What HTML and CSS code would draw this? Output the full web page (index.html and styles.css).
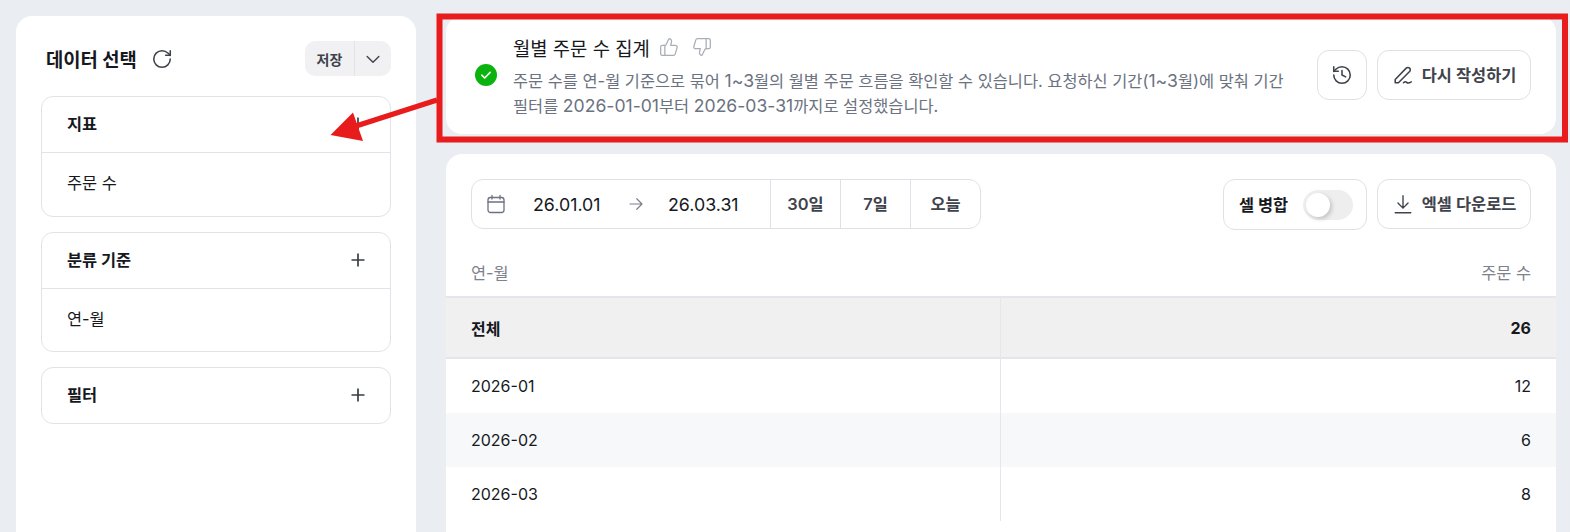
FILE: index.html
```html
<!DOCTYPE html>
<html lang="ko">
<head>
<meta charset="utf-8">
<title>월별 주문 수 집계</title>
<link rel="stylesheet" href="styles.css">
</head>
<body>
<div class="page">
  <aside class="side">
    <div class="side-head">
      <div class="side-title"><h2>데이터 선택</h2>
        <svg class="ic22" viewBox="0 0 24 24"><path d="M21 12a9 9 0 1 1-9-9c2.520 0 4.930 1 6.740 2.740L21 8"/><path d="M21 3v5h-5"/></svg>
      </div>
      <div class="save"><span class="save-label">저장</span><span class="save-more"><svg class="ic20" viewBox="0 0 24 24"><path d="m5 9 7 7 7-7"/></svg></span></div>
    </div>
    <section class="box">
      <div class="box-head"><span>지표</span><svg class="plus" viewBox="0 0 14 14"><path d="M7 .5v13M.5 7h13"/></svg></div>
      <div class="box-body">주문 수</div>
    </section>
    <section class="box">
      <div class="box-head"><span>분류 기준</span><svg class="plus" viewBox="0 0 14 14"><path d="M7 .5v13M.5 7h13"/></svg></div>
      <div class="box-body">연-월</div>
    </section>
    <section class="box">
      <div class="box-head last"><span>필터</span><svg class="plus" viewBox="0 0 14 14"><path d="M7 .5v13M.5 7h13"/></svg></div>
    </section>
  </aside>
  <main class="main">
    <section class="card summary">
      <svg class="check" viewBox="0 0 22 22"><circle cx="11" cy="11" r="11"/><path d="m6.800 11.200 2.900 2.800 5.400-5.600"/></svg>
      <div class="sum-text">
        <div class="sum-title"><h1>월별 주문 수 집계</h1>
          <svg class="thumb" viewBox="0 0 24 24"><path d="M7 10v11"/><path d="M15 5.880 14 10h5.830a2 2 0 0 1 1.920 2.560l-2.330 8A2 2 0 0 1 17.500 22H4a2 2 0 0 1-2-2v-8a2 2 0 0 1 2-2h2.760a2 2 0 0 0 1.790-1.110L12 2a3.130 3.130 0 0 1 3 3.880Z"/></svg>
          <svg class="thumb" viewBox="0 0 24 24"><path d="M17 14V3"/><path d="M9 18.120 10 14H4.170a2 2 0 0 1-1.920-2.560l2.330-8A2 2 0 0 1 6.500 2H20a2 2 0 0 1 2 2v8a2 2 0 0 1-2 2h-2.760a2 2 0 0 0-1.790 1.110L12 22a3.130 3.130 0 0 1-3-3.880Z"/></svg>
        </div>
        <p>주문 수를 연-월 기준으로 묶어 <span class="num">1~3</span>월의 월별 주문 흐름을 확인할 수 있습니다. 요청하신 기간(<span class="num">1~3</span>월)에 맞춰 기간<br>필터를 <span class="num">2026-01-01</span>부터 <span class="num">2026-03-31</span>까지로 설정했습니다.</p>
      </div>
      <div class="btn square"><svg class="ic22" viewBox="0 0 24 24"><path d="M3 12a9 9 0 1 0 9-9 9.750 9.750 0 0 0-6.740 2.740L3 8"/><path d="M3 3v5h5"/><path d="M12 7v5l4 2"/></svg></div>
      <div class="btn wide"><svg class="ic22" viewBox="0 0 24 24"><path d="M3.500 20.500V17L15.500 4.500a2.600 2.600 0 0 1 3.700 3.700L7 20.500Z"/><path d="M12.500 20.500c1.500-1.500 2.500-1.500 3.500-.5s2.500 1 5-.5"/></svg><span>다시 작성하기</span></div>
    </section>
    <section class="card data">
      <div class="toolbar">
        <div class="dates">
          <div class="range">
            <svg class="cal" viewBox="0 0 20 20"><rect x="2" y="3.500" width="16" height="15" rx="2.500"/><path d="M2 8h16M6 1.500v3.500M14 1.500v3.500"/></svg>
            <span class="date">26.01.01</span>
            <svg class="arrow" viewBox="0 0 24 24"><path d="M4 12h16M13 5l7 7-7 7"/></svg>
            <span class="date">26.03.31</span>
          </div>
          <span class="preset">30일</span><span class="preset">7일</span><span class="preset">오늘</span>
        </div>
        <div class="tools">
          <div class="btn merge"><span>셀 병합</span><span class="toggle"><span class="knob"></span></span></div>
          <div class="btn wide"><svg class="ic22 dl" viewBox="0 0 24 24"><path d="M12 3v13.500M6.500 11l5.500 5.500 5.500-5.500M3.500 21.500h17"/></svg><span>엑셀 다운로드</span></div>
        </div>
      </div>
      <div class="thead"><span>연-월</span><span>주문 수</span></div>
      <div class="row total"><div class="c1">전체</div><div class="c2">26</div></div>
      <div class="row"><div class="c1">2026-01</div><div class="c2">12</div></div>
      <div class="row alt"><div class="c1">2026-02</div><div class="c2">6</div></div>
      <div class="row"><div class="c1">2026-03</div><div class="c2">8</div></div>
    </section>
  </main>
</div>
<svg class="annot" viewBox="0 0 1570 532">
  <rect x="439.500" y="16.500" width="1125.500" height="123"/>
  <path class="shaft" d="M437 100 356 126"/>
  <path class="head" d="M330.500 135 353 112.500 363 141Z"/>
</svg>
</body>
</html>
```
FILE: styles.css
```css
* { box-sizing: border-box; }
html, body { margin: 0; height: 100%; }
body {
  position: relative;
  overflow: hidden;
  background: #eaedf2;
  color: #16181d;
  font-family: Inter, "Noto Sans CJK KR", "Noto Sans", sans-serif;
  font-size: 16px;
}
svg { display: block; flex: none; fill: none; stroke: currentColor; stroke-linecap: round; stroke-linejoin: round; }
h1, h2, p { margin: 0; }

.page { display: flex; gap: 30px; height: 532px; padding: 16px 14px 0 16px; overflow: hidden; }

.side {
  flex: none; width: 400px; height: 560px;
  background: #fff; border-radius: 16px 16px 0 0;
  padding: 25px 25px 0;
  display: flex; flex-direction: column; gap: 15px;
}
.side-head { display: flex; justify-content: space-between; align-items: center; height: 35px; margin-bottom: 5px; }
.side-title { display: flex; align-items: center; gap: 14px; padding-left: 5px; color: #3f434c; }
.side-title h2 { font-size: 18.800px; font-weight: 700; color: #16181d; }
.ic22 { width: 22px; height: 22px; stroke-width: 1.700; }
.ic20 { width: 20px; height: 20px; stroke-width: 1.700; }
.dl { stroke-width: 1.500; }

.save { display: flex; height: 35px; width: 86px; background: #f1f1f3; border-radius: 10px; font-size: 14px; font-weight: 600; color: #3f434c; }
.save-label { width: 50px; display: flex; align-items: center; justify-content: center; border-right: 1px solid #e2e3e7; }
.save-more { flex: 1; display: flex; align-items: center; justify-content: center; }

.box { border: 1px solid #e1e3e9; border-radius: 12px; }
.box-head { height: 56px; padding: 0 25px; display: flex; align-items: center; justify-content: space-between; border-bottom: 1px solid #e1e3e9; font-size: 16.400px; font-weight: 700; }
.box-head span { padding-bottom: 3px; }
.box-head.last { border-bottom: 0; height: 55px; }
.plus { width: 14px; height: 14px; stroke-width: 1.700; stroke-linecap: butt; color: #3a3d45; margin-bottom: 1px; }
.box-body { height: 62px; padding: 0 25px 5px; display: flex; align-items: center; font-size: 16.400px; font-weight: 400; }
.box:first-of-type .box-body { height: 63px; }

.main { flex: 1; min-width: 0; display: flex; flex-direction: column; gap: 20px; }
.card { background: #fff; border-radius: 16px; }

.summary { height: 118px; flex: none; display: flex; align-items: center; padding: 0 25px 0 29px; gap: 10px; }
.check { width: 22px; height: 22px; margin-bottom: 1px; margin-right: 6px; stroke: none; }
.check circle { fill: #0bb30f; }
.check path { stroke: #fff; stroke-width: 1.600; }
.sum-text { flex: 1; min-width: 0; padding-top: 3px; }
.sum-title { display: flex; align-items: center; gap: 13px; height: 26px; margin-bottom: 9px; color: #a9adb6; }
.sum-title h1 { font-size: 18.800px; font-weight: 400; color: #16181d; margin-right: -4px; }
.thumb { width: 20px; height: 20px; stroke-width: 1.500; }
.sum-text p { font-size: 16.400px; line-height: 25px; color: #6b7280; white-space: nowrap; }
.num { font-size: 17.600px; line-height: 1; }

.btn { display: flex; align-items: center; justify-content: center; height: 50px; border: 1px solid #dfe1e7; border-radius: 12px; background: #fff; font-size: 16.400px; font-weight: 600; color: #3f434c; }
.btn span { padding-bottom: 2px; }
.square { width: 50px; flex: none; }
.wide { width: 154px; flex: none; gap: 8px; }

.data { flex: none; height: 420px; padding-top: 25px; display: flex; flex-direction: column; }
.toolbar { display: flex; justify-content: space-between; padding: 0 25px; margin-bottom: 20px; }
.dates { display: flex; height: 50px; width: 510px; border: 1px solid #dfe1e7; border-radius: 12px; font-size: 17.800px; }
.range { width: 298px; display: flex; align-items: center; padding-left: 14px; color: #16181d; }
.cal { width: 20px; height: 20px; color: #6b7280; stroke-width: 1.300; margin-right: 27px; }
.date { width: 70px; flex: none; }
.arrow { width: 18px; height: 18px; color: #7b7f88; stroke-width: 1.600; margin: 0 23px 0 24px; }
.preset { width: 70px; display: flex; align-items: center; justify-content: center; border-left: 1px solid #dfe1e7; color: #3f434c; font-weight: 600; font-size: 16.400px; padding-bottom: 2px; }
.tools { display: flex; gap: 10px; }
.merge { width: 144px; gap: 15px; padding-left: 2px; font-weight: 700; color: #16181d; height: 51px; flex: none; }
.merge .toggle { width: 50px; height: 30px; border-radius: 15px; background: #eeeeef; padding: 3px; display: block; }
.knob { display: block; width: 24px; height: 24px; border-radius: 50%; background: #fff; box-shadow: 2px 2px 4px rgba(0,0,0,.18); }

.thead { display: flex; justify-content: space-between; height: 48px; padding: 0 25px 2px; align-items: center; font-size: 16.400px; color: #7d828c; border-bottom: 2px solid #e4e6eb; flex: none; }
.row { display: grid; grid-template-columns: 555px 1fr; height: 54px; align-items: stretch; font-size: 16px; font-weight: 400; flex: none; }
.row .c1 { padding-left: 25px; display: flex; align-items: center; border-right: 1px solid #e4e6eb; }
.row .c2 { padding-right: 25px; display: flex; align-items: center; justify-content: flex-end; }
.row.total { height: 61px; background: #f0f0f1; font-weight: 700; border-bottom: 2px solid #e4e6eb; }
.alt { background: #f7f8fa; }

.annot { position: absolute; left: 0; top: 0; width: 1570px; height: 532px; pointer-events: none; stroke: none; }
.annot rect { fill: none; stroke: #e81c1c; stroke-width: 6; stroke-linejoin: miter; }
.annot .shaft { stroke: #e81c1c; stroke-width: 5.500; stroke-linecap: butt; }
.annot .head { fill: #e81c1c; stroke: none; }
```
